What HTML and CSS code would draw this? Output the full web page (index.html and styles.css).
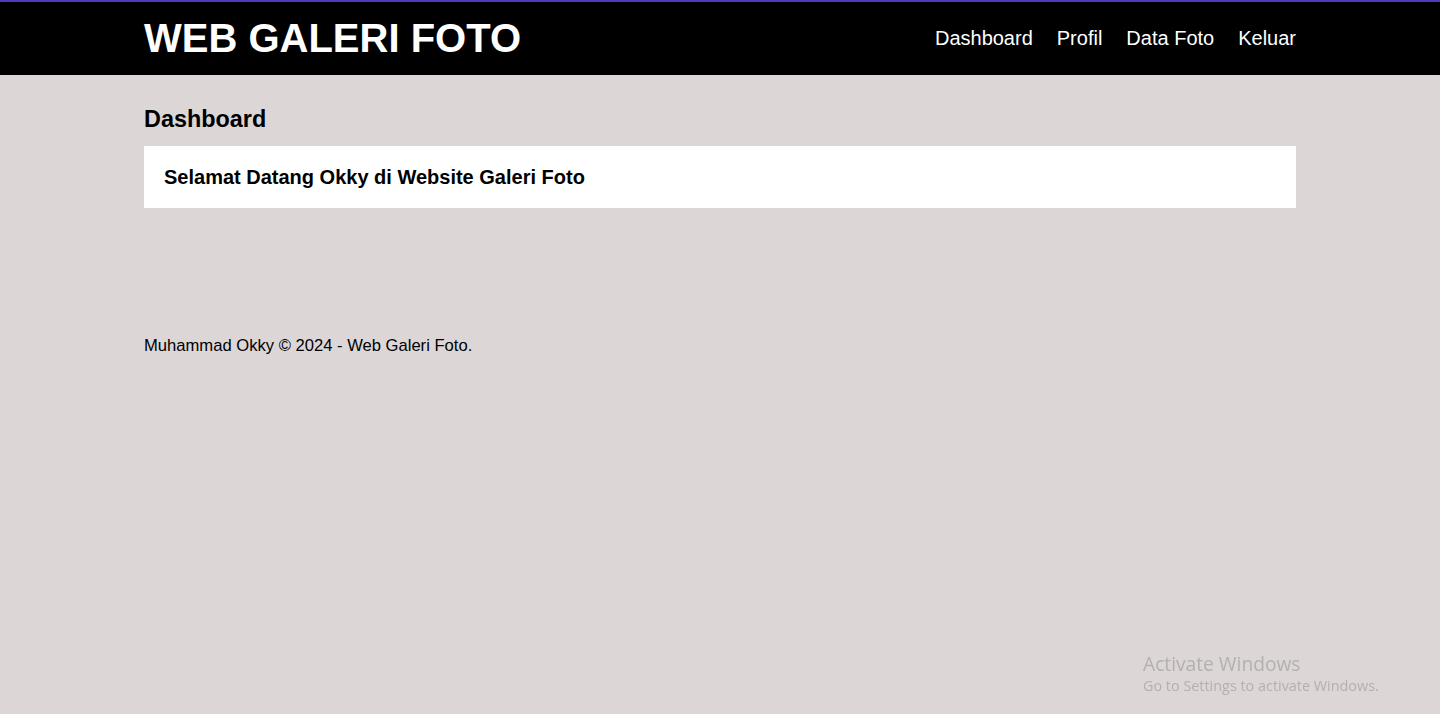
FILE: index.html
```
<!DOCTYPE html>
<html lang="id">
<head>
<meta charset="utf-8">
<title>Web Galeri Foto</title>
<link rel="stylesheet" href="styles.css">
</head>
<body>
<header class="site-header">
  <div class="container header-inner">
    <h1 class="brand">WEB GALERI FOTO</h1>
    <nav class="nav">
      <a href="#">Dashboard</a>
      <a href="#">Profil</a>
      <a href="#">Data Foto</a>
      <a href="#">Keluar</a>
    </nav>
  </div>
</header>
<main class="container content">
  <h2 class="page-title">Dashboard</h2>
  <div class="card">
    <h3 class="welcome">Selamat Datang Okky di Website Galeri Foto</h3>
  </div>
</main>
<footer class="container footer">
  <small>Muhammad Okky &copy; 2024 - Web Galeri Foto.</small>
</footer>
<div class="watermark">
  <div class="wm-title">Activate Windows</div>
  <div class="wm-sub">Go to Settings to activate Windows.</div>
</div>
</body>
</html>
```
FILE: styles.css
```
* { box-sizing: border-box; }
html, body { margin: 0; padding: 0; }
body {
  background: #dcd6d7;
  font-family: "Liberation Sans", Arial, sans-serif;
  color: #000;
  min-height: 714px;
}
.container {
  width: 80%;
  margin: 0 auto;
}
.site-header {
  background: #000;
  border-top: 2px solid #4b3cc2;
  height: 75px;
}
.header-inner {
  display: flex;
  align-items: center;
  justify-content: space-between;
  height: 73px;
}
.brand {
  margin: 0;
  color: #fff;
  font-size: 40px;
  font-weight: bold;
  line-height: 1;
  padding-bottom: 1px;
}
.nav {
  display: flex;
  gap: 24px;
}
.nav a {
  color: #fff;
  text-decoration: none;
  font-size: 20px;
}
.content {
  padding-top: 31px;
}
.page-title {
  margin: 0 0 14px 0;
  font-size: 23.4px;
  line-height: 26px;
}
.card {
  background: #fff;
  padding: 18px 20px;
  height: 62px;
}
.welcome {
  margin: 0;
  font-size: 20px;
  line-height: 26px;
}
.footer {
  padding-top: 128px;
}
.footer small {
  font-size: 16.6px;
}
.watermark {
  position: fixed;
  left: 1143px;
  top: 652px;
  color: #b4afb0;
  font-family: "Open Sans", "Noto Sans", sans-serif;
}
.wm-title {
  font-size: 19.2px;
  line-height: 24px;
}
.wm-sub {
  font-size: 14.4px;
  line-height: 20px;
}
```
